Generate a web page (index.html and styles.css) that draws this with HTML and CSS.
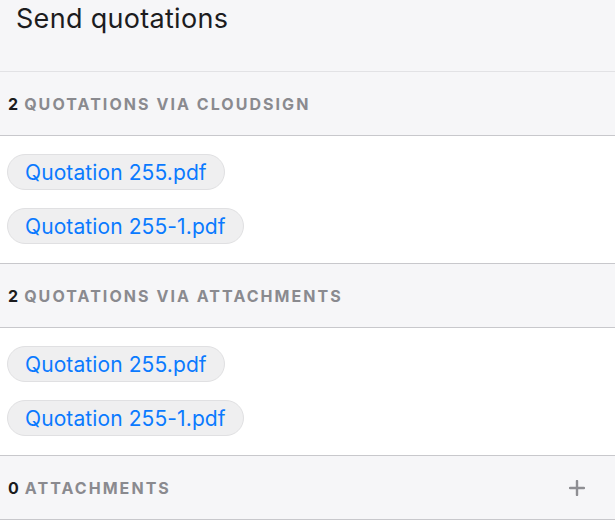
FILE: index.html
```html
<!DOCTYPE html>
<html>
<head>
<meta charset="utf-8">
<link rel="stylesheet" href="styles.css">
</head>
<body>
<div class="page">
  <div class="title-bar"><h1 class="title">Send quotations</h1></div>
  <div class="section-head">
    <span class="count">2</span><span class="label">QUOTATIONS VIA CLOUDSIGN</span>
  </div>
  <div class="section-body">
    <div class="pill">Quotation 255.pdf</div>
    <div class="pill">Quotation 255-1.pdf</div>
  </div>
  <div class="section-head">
    <span class="count">2</span><span class="label">QUOTATIONS VIA ATTACHMENTS</span>
  </div>
  <div class="section-body">
    <div class="pill">Quotation 255.pdf</div>
    <div class="pill">Quotation 255-1.pdf</div>
  </div>
  <div class="section-head">
    <span class="count">0</span><span class="label">ATTACHMENTS</span>
    <svg class="plus" width="16" height="16" viewBox="0 0 16 16"><path d="M8 1v14M1 8h14" stroke="#8e8e93" stroke-width="2.4" stroke-linecap="round"/></svg>
  </div>
</div>
</body>
</html>
```
FILE: styles.css
```css
html, body {
  margin: 0;
  padding: 0;
  background: #ffffff;
  font-family: Inter, "Noto Sans", sans-serif;
}
.page {
  width: 615px;
}
.title-bar {
  background: #f6f6f8;
  height: 71px;
  border-bottom: 1px solid #e2e2e5;
}
.title {
  margin: 0;
  padding: 3px 0 0 16px;
  font-size: 27px;
  font-weight: 400;
  line-height: 32px;
  letter-spacing: 0.3px;
  color: #1c1c1e;
}
.section-head {
  background: #f6f6f8;
  height: 63px;
  border-bottom: 1px solid #c8c8cc;
  display: flex;
  align-items: center;
  padding: 0 8px;
  font-size: 16px;
  font-weight: 700;
  letter-spacing: 2.05px;
}
.section-body + .section-head {
  border-top: 1px solid #c8c8cc;
}
.count {
  color: #1c1c1e;
  margin-right: 4px;
}
.label {
  color: #8a8a8f;
  flex: 1;
}
.plus {
  margin-right: 22px;
}
.section-body {
  display: flex;
  flex-direction: column;
  align-items: flex-start;
  gap: 18px;
  padding: 18px 7px 19px;
}
.pill {
  background: #efeff0;
  border: 1px solid #e0e0e2;
  border-radius: 18px;
  height: 36px;
  box-sizing: border-box;
  display: flex;
  align-items: center;
  padding: 0 17px;
  font-size: 21px;
  letter-spacing: 0.1px;
  color: #0a7aff;
}
```
